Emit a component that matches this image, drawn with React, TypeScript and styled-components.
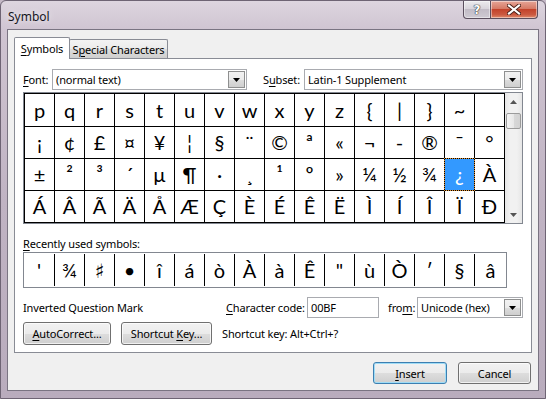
import React from 'react'
import styled, { createGlobalStyle } from 'styled-components'

const GlobalStyle = createGlobalStyle`
  html, body {
    margin: 0;
    padding: 0;
    background: #c4b8c6;
  }
  body {
    font-family: "Noto Sans", "Segoe UI", sans-serif;
    font-size: 11px;
    letter-spacing: -0.15px;
    color: #000;
  }
`

const Window = styled.div`
  width: 546px;
  height: 399px;
  box-sizing: border-box;
  display: flex;
  flex-direction: column;
  border: 1px solid #6e6474;
  border-radius: 6px 6px 0 0;
  overflow: hidden;
  background: linear-gradient(to bottom, #ddd5df 0px, #cfc4d1 30px, #c0b3c3 200px, #b9acbd 399px);
`

const TitleBar = styled.div`
  height: 28px;
  display: flex;
  align-items: flex-start;
  justify-content: space-between;
`

const Title = styled.div`
  padding: 7px 0 0 7px;
  font-size: 12px;
  letter-spacing: 0;
  color: #15151c;
  text-shadow: 0 0 6px rgba(255, 255, 255, 0.9);
`

const CaptionButtons = styled.div`
  display: flex;
  margin-right: 7px;
`

const CaptionButton = styled.div<{ $close?: boolean }>`
  width: ${(p) => (p.$close ? 47 : 28)}px;
  height: 18px;
  box-sizing: border-box;
  display: flex;
  align-items: center;
  justify-content: center;
  border: 1px solid #5b4f5e;
  border-top: none;
  border-left: ${(p) => (p.$close ? 'none' : '1px solid #5b4f5e')};
  border-radius: ${(p) => (p.$close ? '0 0 4px 0' : '0 0 0 4px')};
  background: ${(p) =>
    p.$close
      ? 'linear-gradient(to bottom, #e6a597 0%, #d67a66 45%, #c3432b 50%, #cb5a41 80%, #e08b6c 100%)'
      : 'linear-gradient(to bottom, #ecebee 0%, #d9d5dc 45%, #c2bcc6 50%, #cfcad3 100%)'};
  box-shadow: inset 0 0 0 1px rgba(255, 255, 255, 0.45);
`

const HelpMark = styled.span`
  font-family: "DejaVu Sans", sans-serif;
  font-weight: bold;
  font-size: 12px;
  color: #ffffff;
  text-shadow: 0 0 1px #333, 0 0 1px #333, 0 0 1px #333;
`

const Client = styled.div`
  flex: 1;
  margin: 0 6px 7px 6px;
  border: 1px solid #7a7482;
  background: #f0f0f0;
  padding: 7px 6px 0 6px;
  display: flex;
  flex-direction: column;
`

const TabStrip = styled.div`
  height: 22px;
  display: flex;
  align-items: flex-end;
  margin-bottom: -1px;
  position: relative;
  z-index: 1;
`

const Tab = styled.div<{ $active?: boolean; $w: number }>`
  width: ${(p) => p.$w}px;
  height: ${(p) => (p.$active ? 22 : 19)}px;
  margin-bottom: ${(p) => (p.$active ? 0 : 1)}px;
  margin-left: ${(p) => (p.$active ? 0 : -1)}px;
  box-sizing: border-box;
  border: 1px solid #898c95;
  border-bottom: none;
  border-radius: 2px 2px 0 0;
  background: ${(p) =>
    p.$active ? '#ffffff' : 'linear-gradient(to bottom, #f3f3f3 0%, #ebebeb 50%, #dddddd 51%, #cfcfcf 100%)'};
  display: flex;
  align-items: center;
  justify-content: center;
  padding-top: ${(p) => (p.$active ? 0 : 1)}px;
  position: relative;
  z-index: ${(p) => (p.$active ? 2 : 1)};
`

const U = styled.span`
  text-decoration: underline;
  text-underline-offset: 2px;
`

const TabPanel = styled.div`
  height: 295px;
  box-sizing: border-box;
  border: 1px solid #898c95;
  background: #ffffff;
  padding: 10px 8px 0 8px;
  display: flex;
  flex-direction: column;
`

const Row = styled.div<{ $mt?: number; $h: number }>`
  display: flex;
  align-items: center;
  height: ${(p) => p.$h}px;
  margin-top: ${(p) => p.$mt ?? 0}px;
  white-space: nowrap;
`

const Label = styled.span<{ $w?: number; $ml?: number }>`
  display: inline-block;
  width: ${(p) => (p.$w ? `${p.$w}px` : 'auto')};
  margin-left: ${(p) => p.$ml ?? 0}px;
  flex-shrink: 0;
`

const Combo = styled.div<{ $w: number }>`
  width: ${(p) => p.$w}px;
  height: 21px;
  box-sizing: border-box;
  border: 1px solid #a9abb0;
  background: #fff;
  display: flex;
  align-items: center;
  padding-left: 3px;
  flex-shrink: 0;
`

const ComboText = styled.span`
  flex: 1;
`

const DropButton = styled.span`
  width: 17px;
  height: 17px;
  box-sizing: border-box;
  margin-right: 1px;
  border: 1px solid #8e8f8f;
  background: linear-gradient(to bottom, #f2f2f2 0%, #ebebeb 50%, #dddddd 51%, #cfcfcf 100%);
  display: flex;
  align-items: center;
  justify-content: center;
`

const TextBox = styled.div<{ $w: number }>`
  width: ${(p) => p.$w}px;
  height: 21px;
  box-sizing: border-box;
  border: 1px solid #a9abb0;
  background: #fff;
  display: flex;
  align-items: center;
  padding-left: 3px;
  flex-shrink: 0;
`

const ListBox = styled.div`
  margin-top: 2px;
  width: 500px;
  height: 132px;
  box-sizing: border-box;
  border: 1px solid #828790;
  display: flex;
`

const SymbolGrid = styled.div`
  display: grid;
  grid-template-columns: repeat(16, 29px);
  grid-template-rows: 32px 31px 31px 31px;
  gap: 1px;
  padding: 1px;
  background: #000;
`

const Cell = styled.div<{ $selected?: boolean }>`
  background: ${(p) => (p.$selected ? '#3399ff' : '#ffffff')};
  color: ${(p) => (p.$selected ? '#ffffff' : '#000000')};
  outline: ${(p) => (p.$selected ? '1px dotted #e09030' : 'none')};
  display: flex;
  align-items: center;
  justify-content: center;
  font-family: Lato, "DejaVu Sans", sans-serif;
  font-size: 20px;
  letter-spacing: 0;
  line-height: 1;
  padding-bottom: 1px;
`

const ScrollBar = styled.div`
  width: 17px;
  display: flex;
  flex-direction: column;
  align-items: center;
  background: linear-gradient(to right, #e6e6e6 0%, #f1f1f1 30%, #f1f1f1 70%, #e6e6e6 100%);
`

const ScrollArrow = styled.div`
  height: 17px;
  width: 17px;
  display: flex;
  align-items: center;
  justify-content: center;
`

const Thumb = styled.div`
  margin-top: 3px;
  width: 15px;
  height: 16px;
  box-sizing: border-box;
  border: 1px solid #9b9b9b;
  border-radius: 2px;
  background: linear-gradient(to right, #f4f4f4 0%, #e8e8e8 50%, #d8d8d8 51%, #d2d2d2 100%);
`

const Spacer = styled.div`
  flex: 1;
`

const SectionLabel = styled.div`
  margin-top: 12px;
  height: 15px;
  line-height: 15px;
`

const RecentBox = styled.div`
  margin-top: 1px;
  width: 484px;
  height: 36px;
  box-sizing: border-box;
  border: 1px solid #828790;
  padding: 1px 0;
  display: flex;
`

const RecentCell = styled.div<{ $first?: boolean; $last?: boolean }>`
  width: ${(p) => (p.$first ? 30 : 29)}px;
  flex: ${(p) => (p.$last ? 1 : 'none')};
  border-left: ${(p) => (p.$first ? 'none' : '1px solid #000')};
  display: flex;
  align-items: center;
  justify-content: center;
  font-family: Lato, "DejaVu Sans", sans-serif;
  font-size: 20px;
  letter-spacing: 0;
  line-height: 1;
  padding-bottom: 1px;
`

const Button = styled.div<{ $w: number; $default?: boolean }>`
  width: ${(p) => p.$w}px;
  height: 100%;
  box-sizing: border-box;
  flex-shrink: 0;
  border: 1px solid ${(p) => (p.$default ? '#3c7fb1' : '#707070')};
  border-radius: 3px;
  background: linear-gradient(to bottom, #f2f2f2 0%, #ebebeb 50%, #dddddd 51%, #cfcfcf 100%);
  box-shadow: inset 0 0 0 1px ${(p) => (p.$default ? '#9fdcf6' : 'rgba(255, 255, 255, 0.7)')};
  display: flex;
  align-items: center;
  justify-content: center;
`

const DialogButtons = styled.div`
  margin-top: 9px;
  height: 22px;
  display: flex;
  justify-content: flex-end;
  gap: 11px;
  padding-right: 1px;
`

const DownTriangle = ({ color = '#000' }: { color?: string }) => (
  <svg width="7" height="4" viewBox="0 0 7 4">
    <path d="M0 0 H7 L3.5 4 Z" fill={color} />
  </svg>
)

const UpTriangle = ({ color = '#555' }: { color?: string }) => (
  <svg width="7" height="4" viewBox="0 0 7 4">
    <path d="M0 4 H7 L3.5 0 Z" fill={color} />
  </svg>
)

const CloseGlyph = () => (
  <svg width="14" height="11" viewBox="0 0 14 11">
    <path d="M2 1.5 L12 9.5 M12 1.5 L2 9.5" stroke="#4a2018" strokeWidth="4" strokeLinecap="square" />
    <path d="M2 1.5 L12 9.5 M12 1.5 L2 9.5" stroke="#ffffff" strokeWidth="2.2" strokeLinecap="square" />
  </svg>
)

const symbolRows = [
  ['p', 'q', 'r', 's', 't', 'u', 'v', 'w', 'x', 'y', 'z', '{', '|', '}', '~', ''],
  ['¡', '¢', '£', '¤', '¥', '¦', '§', '¨', '©', 'ª', '«', '¬', '-', '®', '¯', '°'],
  ['±', '²', '³', '´', 'µ', '¶', '·', '¸', '¹', 'º', '»', '¼', '½', '¾', '¿', 'À'],
  ['Á', 'Â', 'Ã', 'Ä', 'Å', 'Æ', 'Ç', 'È', 'É', 'Ê', 'Ë', 'Ì', 'Í', 'Î', 'Ï', 'Ð'],
]

const recent = ["'", '¾', '♯', '•', 'î', 'á', 'ò', 'À', 'à', 'Ê', '"', 'ù', 'Ò', '′', '§', 'â']

const App = () => {
  return (
    <>
      <GlobalStyle />
      <Window>
        <TitleBar>
          <Title>Symbol</Title>
          <CaptionButtons>
            <CaptionButton>
              <HelpMark>?</HelpMark>
            </CaptionButton>
            <CaptionButton $close>
              <CloseGlyph />
            </CaptionButton>
          </CaptionButtons>
        </TitleBar>

        <Client>
          <TabStrip>
            <Tab $active $w={56}>
              <span>
                <U>S</U>ymbols
              </span>
            </Tab>
            <Tab $w={99}>
              <span>
                S<U>p</U>ecial Characters
              </span>
            </Tab>
          </TabStrip>

          <TabPanel>
            <Row $h={21}>
              <Label $w={29}>
                <U>F</U>ont:
              </Label>
              <Combo $w={195}>
                <ComboText>(normal text)</ComboText>
                <DropButton>
                  <DownTriangle />
                </DropButton>
              </Combo>
              <Label $w={41} $ml={16}>
                S<U>u</U>bset:
              </Label>
              <Combo $w={219}>
                <ComboText>Latin-1 Supplement</ComboText>
                <DropButton>
                  <DownTriangle />
                </DropButton>
              </Combo>
            </Row>

            <ListBox>
              <SymbolGrid>
                {symbolRows.map((row, r) =>
                  row.map((ch, c) => (
                    <Cell key={`${r}-${c}`} $selected={r === 2 && c === 14}>
                      {ch}
                    </Cell>
                  ))
                )}
              </SymbolGrid>
              <ScrollBar>
                <ScrollArrow>
                  <UpTriangle />
                </ScrollArrow>
                <Thumb />
                <Spacer />
                <ScrollArrow>
                  <DownTriangle color="#555" />
                </ScrollArrow>
              </ScrollBar>
            </ListBox>

            <SectionLabel>
              <U>R</U>ecently used symbols:
            </SectionLabel>
            <RecentBox>
              {recent.map((ch, i) => (
                <RecentCell key={i} $first={i === 0} $last={i === recent.length - 1}>
                  {ch}
                </RecentCell>
              ))}
            </RecentBox>

            <Row $h={21} $mt={9}>
              <Label $w={203}>Inverted Question Mark</Label>
              <Label $w={81}>
                <U>C</U>haracter code:
              </Label>
              <TextBox $w={72}>00BF</TextBox>
              <Label $w={29} $ml={9}>
                fro<U>m</U>:
              </Label>
              <Combo $w={106}>
                <ComboText>Unicode (hex)</ComboText>
                <DropButton>
                  <DownTriangle />
                </DropButton>
              </Combo>
            </Row>

            <Row $h={23} $mt={4}>
              <Button $w={88}>
                <span>
                  <U>A</U>utoCorrect...
                </span>
              </Button>
              <Label $ml={10} />
              <Button $w={91}>
                <span>
                  Shortcut <U>K</U>ey...
                </span>
              </Button>
              <Label $ml={10}>Shortcut key: Alt+Ctrl+?</Label>
            </Row>
          </TabPanel>

          <DialogButtons>
            <Button $w={74} $default>
              <span>
                <U>I</U>nsert
              </span>
            </Button>
            <Button $w={73}>Cancel</Button>
          </DialogButtons>
        </Client>
      </Window>
    </>
  )
}

export default App
